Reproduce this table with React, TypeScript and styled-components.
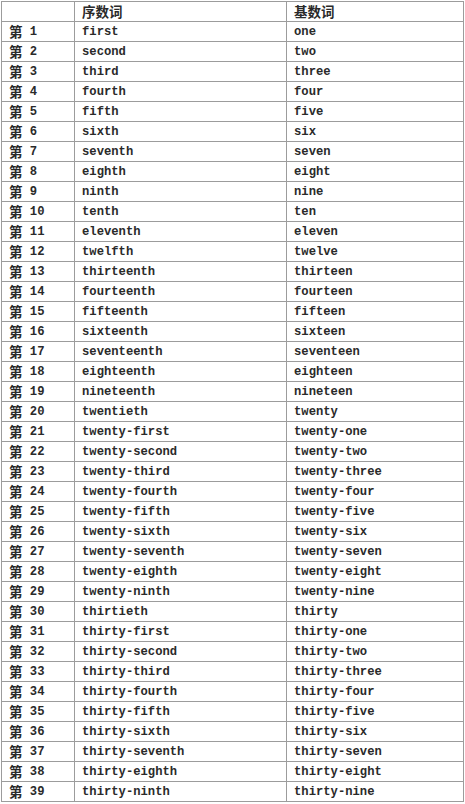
import styled, { createGlobalStyle } from "styled-components";

const GlobalStyle = createGlobalStyle`
  html, body {
    margin: 0;
    padding: 0;
    background: #ffffff;
  }
`;

const ones = ["", "one", "two", "three", "four", "five", "six", "seven", "eight", "nine"];
const onesTh = ["", "first", "second", "third", "fourth", "fifth", "sixth", "seventh", "eighth", "ninth"];
const teens = [
  ["ten", "tenth"],
  ["eleven", "eleventh"],
  ["twelve", "twelfth"],
  ["thirteen", "thirteenth"],
  ["fourteen", "fourteenth"],
  ["fifteen", "fifteenth"],
  ["sixteen", "sixteenth"],
  ["seventeen", "seventeenth"],
  ["eighteen", "eighteenth"],
  ["nineteen", "nineteenth"],
];
const tens: Record<number, [string, string]> = {
  2: ["twenty", "twentieth"],
  3: ["thirty", "thirtieth"],
};

const words = (n: number): [string, string] => {
  if (n < 10) return [onesTh[n], ones[n]];
  if (n < 20) return [teens[n - 10][1], teens[n - 10][0]];
  const t = Math.floor(n / 10);
  const o = n % 10;
  if (o === 0) return [tens[t][1], tens[t][0]];
  return [`${tens[t][0]}-${onesTh[o]}`, `${tens[t][0]}-${ones[o]}`];
};

const rows = Array.from({ length: 39 }, (_, i) => {
  const [ordinal, cardinal] = words(i + 1);
  return { n: i + 1, ordinal, cardinal };
});

const Page = styled.div`
  padding: 1px 0 0 1px;
`;

const Table = styled.table`
  border-collapse: collapse;
  table-layout: fixed;
  width: 462px;
  font-family: "Liberation Mono", "DejaVu Sans Mono", "Noto Sans CJK SC", monospace;
  font-size: 12.2px;
  font-weight: bold;
  color: #2a2a2a;
`;

const Col = styled.col<{ $w: number }>`
  width: ${(p) => p.$w}px;
`;

const Row = styled.tr`
  height: 20px;
`;

const Cell = styled.td`
  border: 1.6px solid #9c9c9c;
  padding: 0 0 0 7px;
  height: 18px;
  line-height: 16px;
  white-space: nowrap;
  overflow: hidden;
  vertical-align: middle;
`;

const Han = styled.span`
  display: inline-block;
  font-family: "Noto Sans CJK SC", sans-serif;
  font-size: 13.5px;
  font-weight: bold;
  line-height: 16px;
  height: 16px;
  vertical-align: top;
  position: relative;
  top: -1px;
`;

export default function App() {
  return (
    <>
      <GlobalStyle />
      <Page>
        <Table>
          <colgroup>
            <Col $w={73} />
            <Col $w={212} />
            <Col $w={177} />
          </colgroup>
          <tbody>
            <Row>
              <Cell />
              <Cell>
                <Han>序数词</Han>
              </Cell>
              <Cell>
                <Han>基数词</Han>
              </Cell>
            </Row>
            {rows.map((r) => (
              <Row key={r.n}>
                <Cell>
                  <Han>第</Han> {r.n}
                </Cell>
                <Cell>{r.ordinal}</Cell>
                <Cell>{r.cardinal}</Cell>
              </Row>
            ))}
          </tbody>
        </Table>
      </Page>
    </>
  );
}
